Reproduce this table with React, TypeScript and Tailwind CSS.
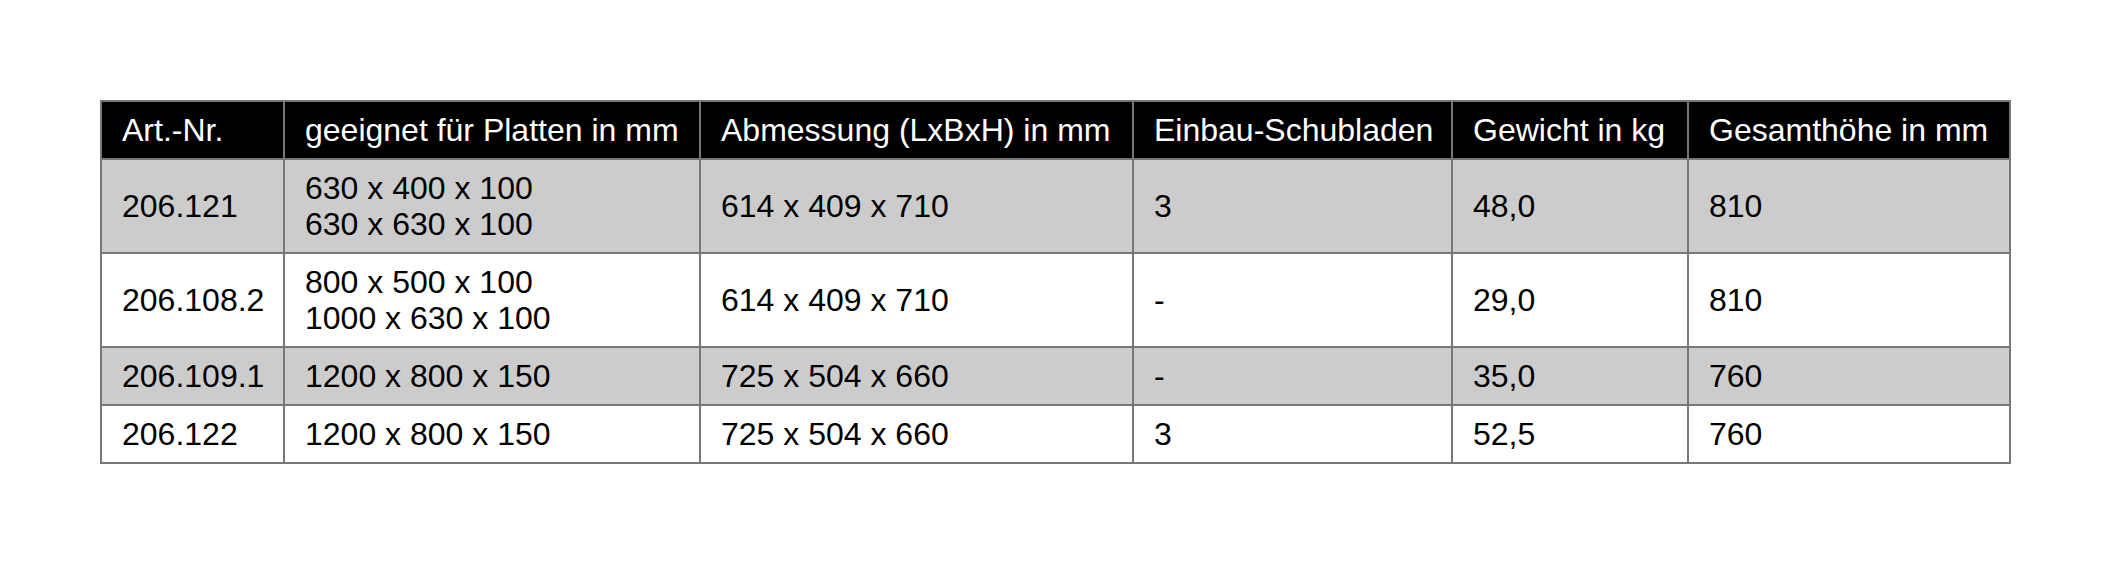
const headers = [
  "Art.-Nr.",
  "geeignet für Platten in mm",
  "Abmessung (LxBxH) in mm",
  "Einbau-Schubladen",
  "Gewicht in kg",
  "Gesamthöhe in mm",
];

const rows: { cells: string[][]; shaded: boolean }[] = [
  {
    cells: [["206.121"], ["630 x 400 x 100", "630 x 630 x 100"], ["614 x 409 x 710"], ["3"], ["48,0"], ["810"]],
    shaded: true,
  },
  {
    cells: [["206.108.2"], ["800 x 500 x 100", "1000 x 630 x 100"], ["614 x 409 x 710"], ["-"], ["29,0"], ["810"]],
    shaded: false,
  },
  {
    cells: [["206.109.1"], ["1200 x 800 x 150"], ["725 x 504 x 660"], ["-"], ["35,0"], ["760"]],
    shaded: true,
  },
  {
    cells: [["206.122"], ["1200 x 800 x 150"], ["725 x 504 x 660"], ["3"], ["52,5"], ["760"]],
    shaded: false,
  },
];

export default function App() {
  return (
    <div className="min-h-[564px] w-[2110px] bg-white pt-[100px] pl-[100px] font-['Liberation_Sans',Arial,sans-serif]">
      <table className="w-[1909px] table-fixed border-collapse text-[32px] leading-[36px]">
        <colgroup>
          <col className="w-[183px]" />
          <col className="w-[416px]" />
          <col className="w-[433px]" />
          <col className="w-[319px]" />
          <col className="w-[236px]" />
          <col className="w-[322px]" />
        </colgroup>
        <thead>
          <tr className="bg-black text-white">
            {headers.map((h) => (
              <th
                key={h}
                className="border-2 border-[#777777] px-[20px] py-[10px] text-left font-normal whitespace-nowrap"
              >
                {h}
              </th>
            ))}
          </tr>
        </thead>
        <tbody>
          {rows.map((row, i) => (
            <tr key={i} className={row.shaded ? "bg-[#cccccc] text-black" : "bg-white text-black"}>
              {row.cells.map((lines, j) => (
                <td
                  key={j}
                  className="border-2 border-[#777777] px-[20px] py-[10px] align-middle whitespace-nowrap"
                >
                  {lines.map((l) => (
                    <div key={l}>{l}</div>
                  ))}
                </td>
              ))}
            </tr>
          ))}
        </tbody>
      </table>
    </div>
  );
}
